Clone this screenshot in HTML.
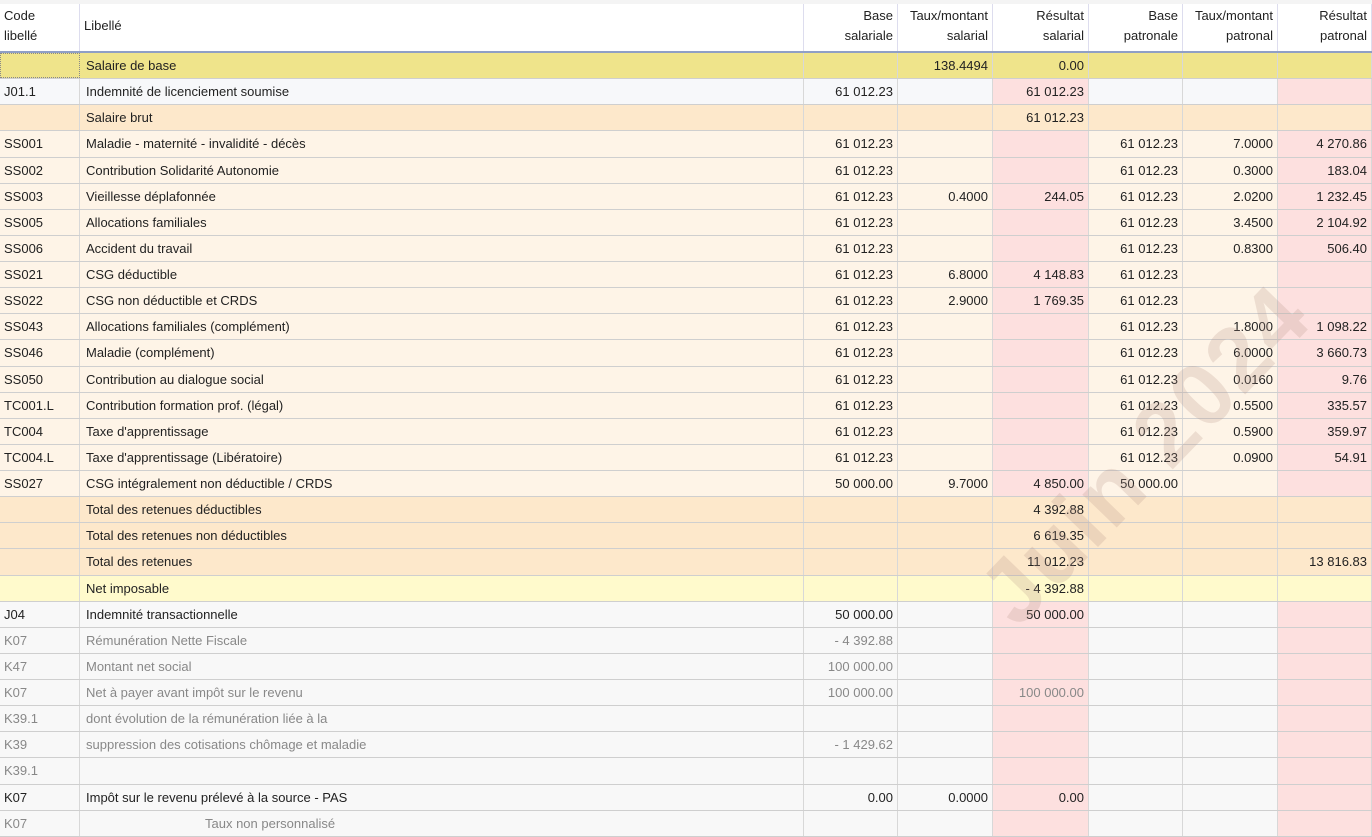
<!DOCTYPE html>
<html><head><meta charset="utf-8"><style>
*{margin:0;padding:0;box-sizing:border-box}
body{width:1372px;height:837px;overflow:hidden;background:#f4f4f4;font-family:"Liberation Sans","DejaVu Sans",sans-serif;font-size:13px;color:#222;position:relative}
.h{position:absolute;top:4px;left:0;width:1372px;height:49px;background:#fff;border-bottom:2px solid #8f9fc6;display:grid;grid-template-columns:80px 724px 94px 95px 96px 94px 95px 94px}
.h div{border-right:1px solid #dde;padding:2px 4px 0 4px;line-height:20px;text-align:right}
.h div:nth-child(1),.h div:nth-child(2){text-align:left}
.h div:nth-child(2){padding-top:12px}
.t{position:absolute;top:53px;left:0;width:1372px}
.r{height:26.13px;display:grid;grid-template-columns:80px 724px 94px 95px 96px 94px 95px 94px;border-bottom:1px solid #cfcfcf}
.r div{border-right:1px solid #d8d8d8;text-align:right;padding:0 4px;line-height:25px;white-space:nowrap}
.r div:nth-child(1){text-align:left;padding-left:4px}
.r div:nth-child(2){text-align:left;padding-left:6px}
.y{background:#efe48b}.y div:first-child{border:1px dotted #888}
.w{background:#f7f8fa}
.o{background:#fde8cb}
.c{background:#fef4e7}
.n{background:#fffacc}
.g{background:#f8f8f8}
.w div:nth-child(5),.w div:nth-child(8),.c div:nth-child(5),.c div:nth-child(8),.g div:nth-child(5),.g div:nth-child(8){background:#fde0df}
.gr{color:#888}
.wm{position:absolute;left:885px;top:405px;width:520px;text-align:center;font-weight:bold;font-size:90px;white-space:nowrap;color:rgba(185,150,140,0.24);transform:rotate(-46deg);transform-origin:center;line-height:100px;pointer-events:none;letter-spacing:2px}
</style></head><body>
<div class="h"><div>Code<br>libellé</div><div>Libellé</div><div>Base<br>salariale</div><div>Taux/montant<br>salarial</div><div>Résultat<br>salarial</div><div>Base<br>patronale</div><div>Taux/montant<br>patronal</div><div>Résultat<br>patronal</div></div>
<div class="t">
<div class="r y"><div></div><div>Salaire de base</div><div></div><div>138.4494</div><div>0.00</div><div></div><div></div><div></div></div>
<div class="r w"><div>J01.1</div><div>Indemnité de licenciement soumise</div><div>61 012.23</div><div></div><div>61 012.23</div><div></div><div></div><div></div></div>
<div class="r o"><div></div><div>Salaire brut</div><div></div><div></div><div>61 012.23</div><div></div><div></div><div></div></div>
<div class="r c"><div>SS001</div><div>Maladie - maternité - invalidité - décès</div><div>61 012.23</div><div></div><div></div><div>61 012.23</div><div>7.0000</div><div>4 270.86</div></div>
<div class="r c"><div>SS002</div><div>Contribution Solidarité Autonomie</div><div>61 012.23</div><div></div><div></div><div>61 012.23</div><div>0.3000</div><div>183.04</div></div>
<div class="r c"><div>SS003</div><div>Vieillesse déplafonnée</div><div>61 012.23</div><div>0.4000</div><div>244.05</div><div>61 012.23</div><div>2.0200</div><div>1 232.45</div></div>
<div class="r c"><div>SS005</div><div>Allocations familiales</div><div>61 012.23</div><div></div><div></div><div>61 012.23</div><div>3.4500</div><div>2 104.92</div></div>
<div class="r c"><div>SS006</div><div>Accident du travail</div><div>61 012.23</div><div></div><div></div><div>61 012.23</div><div>0.8300</div><div>506.40</div></div>
<div class="r c"><div>SS021</div><div>CSG déductible</div><div>61 012.23</div><div>6.8000</div><div>4 148.83</div><div>61 012.23</div><div></div><div></div></div>
<div class="r c"><div>SS022</div><div>CSG non déductible et CRDS</div><div>61 012.23</div><div>2.9000</div><div>1 769.35</div><div>61 012.23</div><div></div><div></div></div>
<div class="r c"><div>SS043</div><div>Allocations familiales (complément)</div><div>61 012.23</div><div></div><div></div><div>61 012.23</div><div>1.8000</div><div>1 098.22</div></div>
<div class="r c"><div>SS046</div><div>Maladie (complément)</div><div>61 012.23</div><div></div><div></div><div>61 012.23</div><div>6.0000</div><div>3 660.73</div></div>
<div class="r c"><div>SS050</div><div>Contribution au dialogue social</div><div>61 012.23</div><div></div><div></div><div>61 012.23</div><div>0.0160</div><div>9.76</div></div>
<div class="r c"><div>TC001.L</div><div>Contribution formation prof. (légal)</div><div>61 012.23</div><div></div><div></div><div>61 012.23</div><div>0.5500</div><div>335.57</div></div>
<div class="r c"><div>TC004</div><div>Taxe d'apprentissage</div><div>61 012.23</div><div></div><div></div><div>61 012.23</div><div>0.5900</div><div>359.97</div></div>
<div class="r c"><div>TC004.L</div><div>Taxe d'apprentissage (Libératoire)</div><div>61 012.23</div><div></div><div></div><div>61 012.23</div><div>0.0900</div><div>54.91</div></div>
<div class="r c"><div>SS027</div><div>CSG intégralement non déductible / CRDS</div><div>50 000.00</div><div>9.7000</div><div>4 850.00</div><div>50 000.00</div><div></div><div></div></div>
<div class="r o"><div></div><div>Total des retenues déductibles</div><div></div><div></div><div>4 392.88</div><div></div><div></div><div></div></div>
<div class="r o"><div></div><div>Total des retenues non déductibles</div><div></div><div></div><div>6 619.35</div><div></div><div></div><div></div></div>
<div class="r o"><div></div><div>Total des retenues</div><div></div><div></div><div>11 012.23</div><div></div><div></div><div>13 816.83</div></div>
<div class="r n"><div></div><div>Net imposable</div><div></div><div></div><div>- 4 392.88</div><div></div><div></div><div></div></div>
<div class="r g"><div>J04</div><div>Indemnité transactionnelle</div><div>50 000.00</div><div></div><div>50 000.00</div><div></div><div></div><div></div></div>
<div class="r g gr"><div>K07</div><div>Rémunération Nette Fiscale</div><div>- 4 392.88</div><div></div><div></div><div></div><div></div><div></div></div>
<div class="r g gr"><div>K47</div><div>Montant net social</div><div>100 000.00</div><div></div><div></div><div></div><div></div><div></div></div>
<div class="r g gr"><div>K07</div><div>Net à payer avant impôt sur le revenu</div><div>100 000.00</div><div></div><div>100 000.00</div><div></div><div></div><div></div></div>
<div class="r g gr"><div>K39.1</div><div>dont évolution de la rémunération liée à la</div><div></div><div></div><div></div><div></div><div></div><div></div></div>
<div class="r g gr"><div>K39</div><div>suppression des cotisations chômage et maladie</div><div>- 1 429.62</div><div></div><div></div><div></div><div></div><div></div></div>
<div class="r g gr"><div>K39.1</div><div></div><div></div><div></div><div></div><div></div><div></div><div></div></div>
<div class="r g"><div>K07</div><div>Impôt sur le revenu prélevé à la source - PAS</div><div>0.00</div><div>0.0000</div><div>0.00</div><div></div><div></div><div></div></div>
<div class="r g gr"><div>K07</div><div style="padding-left:125px">Taux non personnalisé</div><div></div><div></div><div></div><div></div><div></div><div></div></div>
</div>
<div class="wm">Juin 2024</div>
</body></html>
